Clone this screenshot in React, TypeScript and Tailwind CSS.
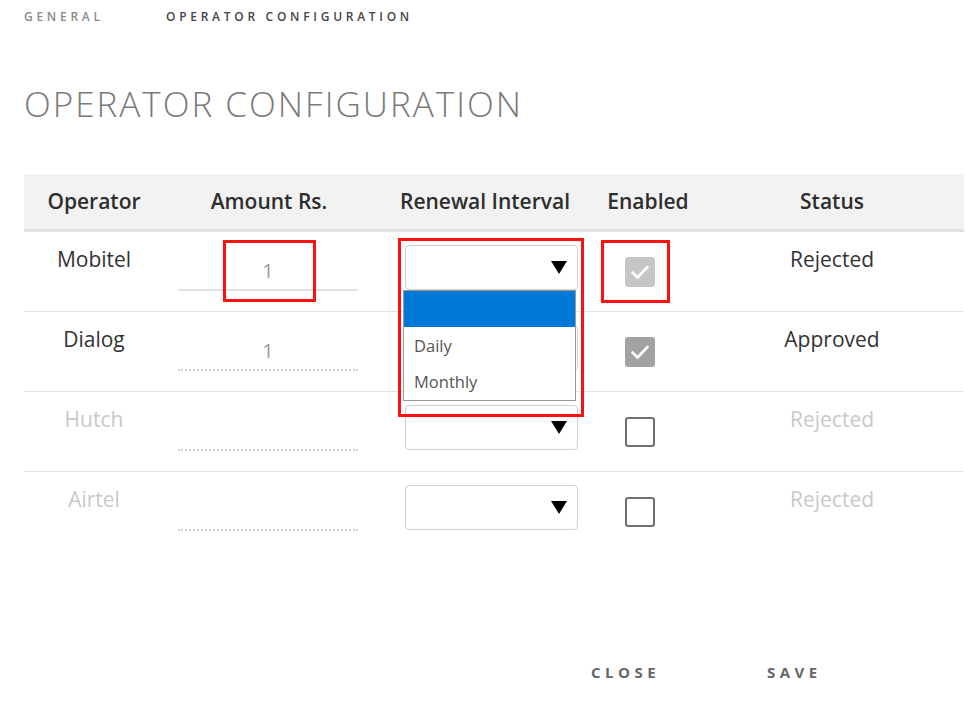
import React from "react";

const rows = [
  { name: "Mobitel", amount: "1", solid: true, check: "disabled", status: "Rejected", active: true },
  { name: "Dialog", amount: "1", solid: false, check: "checked", status: "Approved", active: true },
  { name: "Hutch", amount: "", solid: false, check: "empty", status: "Rejected", active: false },
  { name: "Airtel", amount: "", solid: false, check: "empty", status: "Rejected", active: false },
];

function Check({ kind }: { kind: string }) {
  if (kind === "empty") {
    return <div className="w-[30px] h-[30px] rounded-[3px] border-2 border-[#6f6f6f] bg-white" />;
  }
  const bg = kind === "disabled" ? "bg-[#c6c6c6]" : "bg-[#a2a2a2]";
  return (
    <div className={`w-[30px] h-[30px] rounded-[3px] ${bg} flex items-center justify-center`}>
      <svg width="20" height="16" viewBox="0 0 20 16" fill="none">
        <path d="M2.5 8.5 L7.5 13.5 L17.5 3" stroke="white" strokeWidth="2.6" strokeLinecap="round" strokeLinejoin="round" />
      </svg>
    </div>
  );
}

function Select() {
  return (
    <div className="w-[173px] h-[45px] rounded-[4px] border border-[#cfcfcf] bg-white flex items-center justify-end pr-[10px]">
      <svg width="16" height="13" viewBox="0 0 16 13">
        <polygon points="0,0 16,0 8,13" fill="#000" />
      </svg>
    </div>
  );
}

export default function App() {
  return (
    <div className="w-[974px] h-[702px] bg-white overflow-hidden" style={{ fontFamily: '"Open Sans", sans-serif' }}>
      <div className="h-[34px] flex items-center pl-[24px] text-[12px] font-semibold tracking-[0.31em]">
        <span className="text-[#8a8a8a] w-[142px]">GENERAL</span>
        <span className="text-[#444]">OPERATOR CONFIGURATION</span>
      </div>

      <div className="mt-[48px] pl-[24px] h-[44px] leading-[44px] text-[35px] font-light tracking-[2px] text-[#7a7a7a]">
        OPERATOR CONFIGURATION
      </div>

      <div className="mt-[48px] ml-[24px] w-[940px]">
        <div className="flex h-[58px] bg-[#f2f2f2] border-b-[3px] border-[#e0e0e0] items-center text-[21px] font-semibold text-[#2e2e2e]">
          <div className="w-[140px] text-center">Operator</div>
          <div className="w-[210px] text-center">Amount Rs.</div>
          <div className="w-[222px] text-center">Renewal Interval</div>
          <div className="w-[104px] text-center">Enabled</div>
          <div className="w-[264px] text-center">Status</div>
        </div>

        {rows.map((r, i) => {
          const textColor = r.active ? "text-[#333]" : "text-[#c9c9c9]";
          return (
            <div
              key={r.name}
              className={`flex h-[80px] text-[21px] ${i < 3 ? "border-b border-[#e3e3e3]" : ""}`}
            >
              <div className={`w-[140px] text-center pt-[13px] leading-[28px] ${textColor}`}>{r.name}</div>
              <div className="w-[210px] relative pt-[19px]">
                <div
                  className={`ml-[14px] w-[180px] h-[40px] flex items-center justify-center text-[#9a9a9a] text-[20px] pt-[2px] ${
                    r.solid ? "border-b-2 border-[#e0e0e0]" : "border-b-2 border-dotted border-[#cfcfcf]"
                  }`}
                >
                  {r.amount}
                </div>
                {i === 0 && (
                  <div className="absolute left-[59px] top-[8px] w-[93px] h-[62px] border-[3px] border-[#ff1010] z-20" />
                )}
              </div>
              <div className="w-[222px] relative pt-[13px]">
                <div className="ml-[31px]">
                  <Select />
                </div>
                {i === 0 && (
                  <>
                    <div className="absolute left-[29px] top-[58px] w-[173px] h-[111px] border border-[#9a9a9a] bg-white z-10 text-[16.5px] text-[#555]">
                      <div className="h-[36px] bg-[#0078d7]" />
                      <div className="h-[36px] flex items-center pl-[10px] pt-[2px]">Daily</div>
                      <div className="h-[36px] flex items-center pl-[10px] pt-[2px]">Monthly</div>
                    </div>
                    <div className="absolute left-[24px] top-[6px] w-[186px] h-[179px] border-[3px] border-[#ff1010] z-20" />
                  </>
                )}
              </div>
              <div className="w-[104px] relative pt-[25px]">
                <div className="ml-[29px]">
                  <Check kind={r.check} />
                </div>
                {i === 0 && (
                  <div className="absolute left-[5px] top-[8px] w-[69px] h-[63px] border-[3px] border-[#ff1010] z-20" />
                )}
              </div>
              <div className={`w-[264px] text-center pt-[13px] leading-[28px] ${textColor}`}>{r.status}</div>
            </div>
          );
        })}
      </div>

      <div className="mt-[110px] flex pl-[591px] text-[15px] font-bold tracking-[0.3em] text-[#666] leading-[20px]">
        <span className="w-[176px]">CLOSE</span>
        <span>SAVE</span>
      </div>
    </div>
  );
}
